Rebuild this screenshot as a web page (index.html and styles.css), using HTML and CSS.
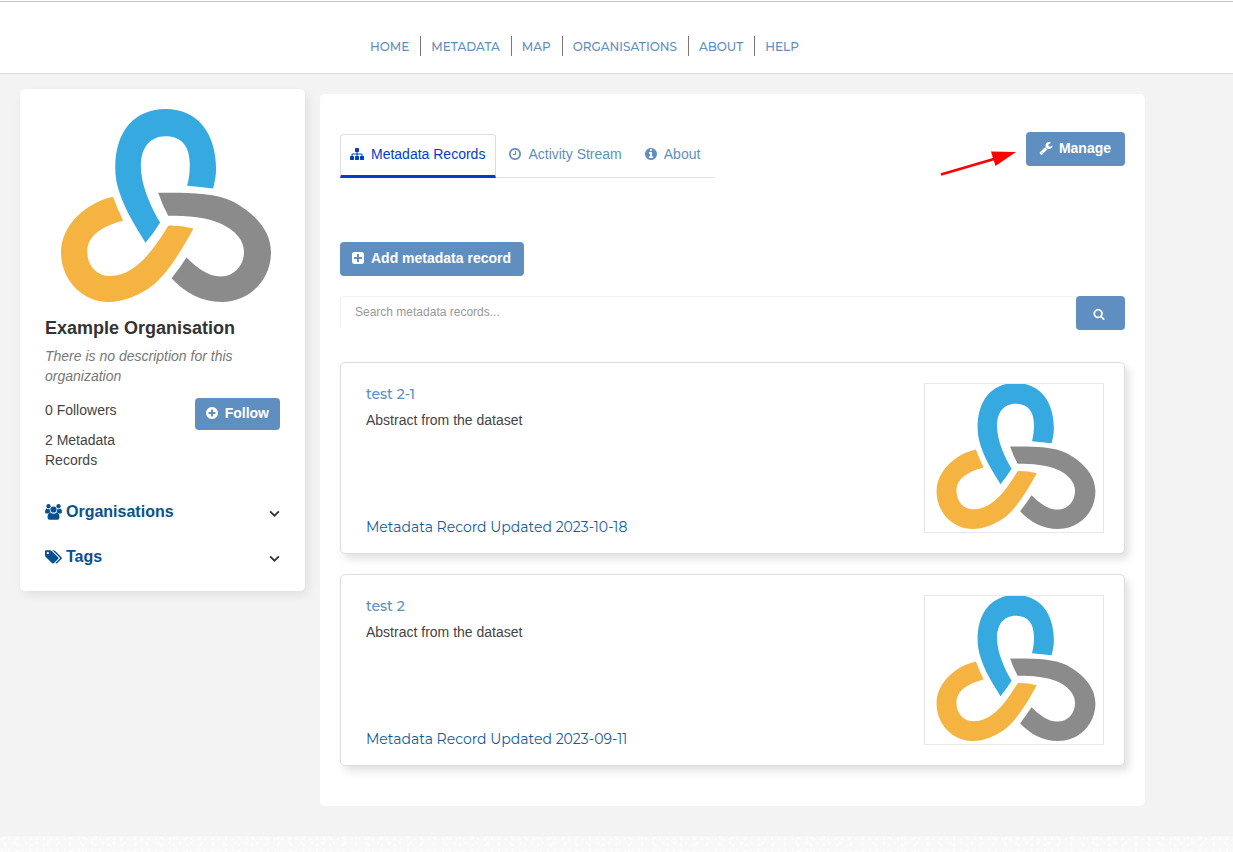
FILE: index.html
```html
<!DOCTYPE html>
<html lang="en">
<head>
<meta charset="utf-8">
<meta name="viewport" content="width=device-width, initial-scale=1">
<title>Example Organisation</title>
<link rel="stylesheet" href="styles.css">
</head>
<body>
<svg class="sprite" aria-hidden="true">
  <symbol id="logo" viewBox="62 41 631 580">
    <path fill="#36a9e1" d="M316 443C290 400 256 350 237 290C228 262 225 240 225 218C225 105 285 41 377 41C473 41 528 115 528 222C528 243 523 264 519 280Q480 275 441 272C447 250 449 230 449 208C449 155 426 123 376 123C327 123 302 160 302 212C302 270 333 337 360 382Q341 413 316 443Z"/>
    <path fill="#8b8b8b" d="M354 293C430 293 520 290 580 320C642 354 693 405 693 472C693 553 630 621 545 621C484 621 434 593 394 550Q418 520 439 487C470 517 503 544 542 544C583 544 612 511 612 470C612 433 583 405 546 387C500 366 442 362 384 362Q366 329 354 293Z"/>
    <path fill="#f5b341" d="M218 305Q232 342 249 377C195 390 141 418 141 469C141 513 170 543 210 543C290 543 346 453 385 391Q423 390 460 400C431 453 388 529 340 569C302 600 248 621 204 621C124 621 62 552 62 473C62 386 142 322 218 305Z"/>
  </symbol>
  <symbol id="sitemap" viewBox="0 0 1792 1792"><path d="M1792 1248v320q0 40-28 68t-68 28h-320q-40 0-68-28t-28-68v-320q0-40 28-68t68-28h96v-192h-512v192h96q40 0 68 28t28 68v320q0 40-28 68t-68 28h-320q-40 0-68-28t-28-68v-320q0-40 28-68t68-28h96v-192h-512v192h96q40 0 68 28t28 68v320q0 40-28 68t-68 28h-320q-40 0-68-28t-28-68v-320q0-40 28-68t68-28h96v-192q0-52 38-90t90-38h512v-192h-96q-40 0-68-28t-28-68v-320q0-40 28-68t68-28h320q40 0 68 28t28 68v320q0 40-28 68t-68 28h-96v192h512q52 0 90 38t38 90v192h96q40 0 68 28t28 68z"/></symbol>
  <symbol id="clock" viewBox="0 0 1792 1792"><path d="M1024 544v448q0 14-9 23t-23 9h-320q-14 0-23-9t-9-23v-64q0-14 9-23t23-9h224v-352q0-14 9-23t23-9h64q14 0 23 9t9 23zm416 352q0-148-73-273t-198-198-273-73-273 73-198 198-73 273 73 273 198 198 273 73 273-73 198-198 73-273zm224 0q0 209-103 385.500t-279.500 279.500-385.500 103-385.500-103-279.500-279.500-103-385.500 103-385.500 279.500-279.500 385.500-103 385.500 103 279.500 279.500 103 385.500z"/></symbol>
  <symbol id="info" viewBox="0 0 1792 1792"><path d="M1152 1376v-160q0-14-9-23t-23-9h-96v-512q0-14-9-23t-23-9h-320q-14 0-23 9t-9 23v160q0 14 9 23t23 9h96v320h-96q-14 0-23 9t-9 23v160q0 14 9 23t23 9h448q14 0 23-9t9-23zm-128-896v-160q0-14-9-23t-23-9h-192q-14 0-23 9t-9 23v160q0 14 9 23t23 9h192q14 0 23-9t9-23zm640 416q0 209-103 385.500t-279.500 279.500-385.500 103-385.500-103-279.500-279.500-103-385.500 103-385.500 279.500-279.500 385.500-103 385.500 103 279.500 279.500 103 385.500z"/></symbol>
  <symbol id="wrench" viewBox="0 0 1792 1792"><path d="M448 1472q0-26-19-45t-45-19-45 19-19 45 19 45 45 19 45-19 19-45zm644-420l-682 682q-37 37-90 37-52 0-91-37l-106-108q-38-36-38-90 0-53 38-91l681-681q39 98 114.500 173.500t173.500 114.500zm634-435q0 39-23 106-47 134-164.500 217.500t-258.500 83.500q-185 0-316.500-131.500t-131.500-316.500 131.500-316.500 316.500-131.500q58 0 121.500 16.500t107.500 46.500q16 11 16 28t-16 28l-293 169v224l193 107q5-3 79-48.500t135.500-81 70.500-35.500q15 0 23.500 10t8.500 25z"/></symbol>
  <symbol id="plus-square" viewBox="0 0 1792 1792"><path d="M1408 960v-128q0-26-19-45t-45-19h-320v-320q0-26-19-45t-45-19h-128q-26 0-45 19t-19 45v320h-320q-26 0-45 19t-19 45v128q0 26 19 45t45 19h320v320q0 26 19 45t45 19h128q26 0 45-19t19-45v-320h320q26 0 45-19t19-45zm256-544v960q0 119-84.500 203.500t-203.500 84.500h-960q-119 0-203.500-84.500t-84.500-203.500v-960q0-119 84.500-203.500t203.500-84.500h960q119 0 203.500 84.500t84.500 203.500z"/></symbol>
  <symbol id="plus-circle" viewBox="0 0 1792 1792"><path d="M1344 960v-128q0-26-19-45t-45-19h-256v-256q0-26-19-45t-45-19h-128q-26 0-45 19t-19 45v256h-256q-26 0-45 19t-19 45v128q0 26 19 45t45 19h256v256q0 26 19 45t45 19h128q26 0 45-19t19-45v-256h256q26 0 45-19t19-45zm320-64q0 209-103 385.500t-279.500 279.500-385.500 103-385.500-103-279.500-279.500-103-385.500 103-385.500 279.500-279.500 385.500-103 385.500 103 279.500 279.500 103 385.500z"/></symbol>
  <symbol id="search" viewBox="0 0 1792 1792"><path d="M1216 832q0-185-131.500-316.500t-316.500-131.500-316.500 131.500-131.500 316.500 131.500 316.500 316.500 131.500 316.500-131.500 131.500-316.500zm512 832q0 52-38 90t-90 38q-54 0-90-38l-343-342q-179 124-399 124-143 0-273.500-55.500t-225-150-150-225-55.500-273.500 55.500-273.500 150-225 225-150 273.500-55.500 273.500 55.500 225 150 150 225 55.500 273.500q0 220-124 399l343 343q37 37 37 90z"/></symbol>
  <symbol id="tags" viewBox="0 0 1920 1792"><path d="M448 448q0-53-37.500-90.500t-90.500-37.500-90.500 37.500-37.500 90.500 37.500 90.500 90.500 37.500 90.500-37.500 37.500-90.500zm1067 576q0 53-37 90l-491 492q-39 37-91 37-53 0-90-37l-715-716q-38-37-64.500-101t-26.500-117v-416q0-52 38-90t90-38h416q53 0 117 26.500t102 64.500l715 714q37 39 37 91zm384 0q0 53-37 90l-491 492q-39 37-91 37-36 0-59-14t-53-45l470-470q37-37 37-90 0-52-37-91l-715-714q-38-38-102-64.500t-117-26.500h224q53 0 117 26.500t102 64.500l715 714q37 39 37 91z"/></symbol>
  <symbol id="users" viewBox="0 0 34 32"><circle cx="7" cy="4.500" r="4.300"/><circle cx="27" cy="4.500" r="4.300"/><circle cx="17" cy="11" r="6.200"/><path d="M3 9Q5 11 9.500 10Q9 14 11.500 17Q8 17 6 19H3Q0 19 0 16Q0 10 3 9ZM31 9Q29 11 24.500 10Q25 14 22.500 17Q26 17 28 19H31Q34 19 34 16Q34 10 31 9ZM11 17.500Q17 21 23 17.500Q29 17.500 29 27Q29 31.500 24.500 31.500H9.500Q5 31.500 5 27Q5 17.500 11 17.500Z"/></symbol>
  <symbol id="chevron" viewBox="0 0 10 8"><path d="M1 2L5 6L9 2" fill="none" stroke="#333" stroke-width="1.600"/></symbol>
</svg>

<header class="header">
  <nav class="nav" aria-label="Main">
    <a href="#">HOME</a><a href="#">METADATA</a><a href="#">MAP</a><a href="#">ORGANISATIONS</a><a href="#">ABOUT</a><a href="#">HELP</a>
  </nav>
</header>

<div class="page">
  <aside class="sidebar">
    <svg class="org-logo" role="img" aria-label="Example Organisation logo"><use href="#logo"/></svg>
    <h1 class="org-name">Example Organisation</h1>
    <p class="org-empty">There is no description for this organization</p>
    <div class="org-stats">
      <div class="counts">
        <span>0 Followers</span>
        <span>2 Metadata Records</span>
      </div>
      <button class="btn btn-follow" type="button"><svg class="icon"><use href="#plus-circle"/></svg>Follow</button>
    </div>
    <div class="facets">
      <button class="facet" type="button"><svg class="facet-icon"><use href="#users"/></svg><span>Organisations</span><svg class="chevron"><use href="#chevron"/></svg></button>
      <button class="facet" type="button"><svg class="facet-icon"><use href="#tags"/></svg><span>Tags</span><svg class="chevron"><use href="#chevron"/></svg></button>
    </div>
  </aside>

  <main class="main">
    <div class="toolbar">
      <nav class="tabs" aria-label="Organisation">
        <a class="tab tab-active" href="#"><svg class="icon"><use href="#sitemap"/></svg>Metadata Records</a>
        <a class="tab" href="#"><svg class="icon"><use href="#clock"/></svg>Activity Stream</a>
        <a class="tab" href="#"><svg class="icon"><use href="#info"/></svg>About</a>
      </nav>
      <div class="manage">
        <svg class="arrow" viewBox="0 0 76 26" aria-hidden="true"><path d="M1 24.500L54 9" stroke="#f00" stroke-width="2.800"/><path d="M76 2L51 1.500L55.500 16Z" fill="#f00"/></svg>
        <a class="btn btn-manage" href="#"><svg class="icon"><use href="#wrench"/></svg>Manage</a>
      </div>
    </div>

    <a class="btn" href="#"><svg class="icon"><use href="#plus-square"/></svg>Add metadata record</a>

    <form class="search">
      <input type="text" aria-label="Search metadata records" placeholder="Search metadata records...">
      <button class="btn btn-search" type="button" aria-label="Search"><svg class="icon"><use href="#search"/></svg></button>
    </form>

    <div class="records">
      <article class="record">
        <div class="record-body">
          <h2 class="record-title"><a href="#">test 2-1</a></h2>
          <p class="abstract">Abstract from the dataset</p>
          <p class="updated">Metadata Record Updated 2023-10-18</p>
        </div>
        <div class="thumb"><svg role="img" aria-label="Example Organisation"><use href="#logo"/></svg></div>
      </article>
      <article class="record">
        <div class="record-body">
          <h2 class="record-title"><a href="#">test 2</a></h2>
          <p class="abstract">Abstract from the dataset</p>
          <p class="updated">Metadata Record Updated 2023-09-11</p>
        </div>
        <div class="thumb"><svg role="img" aria-label="Example Organisation"><use href="#logo"/></svg></div>
      </article>
    </div>
  </main>
</div>
<footer class="footer"></footer>
</body>
</html>
```

FILE: styles.css
```css
* { box-sizing: border-box; }

html { overflow-x: hidden; }

body {
  display: flex;
  flex-direction: column;
  min-height: 100vh;
  margin: 0;
  background: #f3f3f3;
  color: #444;
  font: 14px/20px "Liberation Sans", Arial, sans-serif;
}

h1, h2, p { margin: 0; }
a { color: #5f8fc1; text-decoration: none; }
button, input { font: inherit; }
svg { flex: none; fill: currentColor; }
.sprite { position: absolute; width: 0; height: 0; }

.header {
  margin-top: 1px;
  padding: 34px 360px 17px;
  border-top: 1px solid #c4c4c4;
  border-bottom: 1px solid #ddd;
  background: #fff;
  box-shadow: 0 -1px #fff;
}

.nav {
  display: flex;
  font-family: Montserrat, Inter, sans-serif;
  font-size: 12px;
  font-weight: 500;
  line-height: 18px;
}

.nav a { padding: 2px 11px 0 10px; }
.nav a + a { border-left: 1px solid #777; }

.page {
  display: flex;
  align-items: flex-start;
  gap: 15px;
  padding: 15px 88px 30px 20px;
}

.sidebar {
  flex: none;
  width: 285px;
  padding: 20px 25px;
  border-radius: 5px;
  background: #fff;
  box-shadow: 3px 4px 10px rgba(0, 0, 0, .08);
}

.org-logo {
  display: block;
  width: 210px;
  height: 193px;
  margin: 0 auto 14px 16px;
}

.org-name {
  margin-bottom: 6px;
  color: #333;
  font-size: 18px;
  line-height: 24px;
}

.org-empty { color: #777; font-style: italic; }

.org-stats {
  display: flex;
  justify-content: space-between;
  align-items: flex-start;
  margin-top: 12px;
}

.counts {
  display: flex;
  flex-direction: column;
  gap: 10px;
  width: 100px;
  padding-top: 2px;
}

.facets {
  display: flex;
  flex-direction: column;
  gap: 21px;
  margin: 30px 0 2px;
}

.facet {
  display: flex;
  align-items: center;
  gap: 4px;
  padding: 0;
  border: 0;
  background: none;
  color: #08518f;
  font-size: 16px;
  font-weight: bold;
  line-height: 24px;
}

.facet-icon { width: 17px; height: 16px; }
.chevron { width: 11px; height: 9px; margin: 2px 0 0 auto; }

.btn {
  display: inline-flex;
  align-items: center;
  gap: 6px;
  height: 34px;
  padding: 0 13px 2px 11px;
  border: 0;
  border-radius: 4px;
  background: #5f8fc1;
  color: #fff;
  font-weight: bold;
}

.icon { width: 14px; height: 14px; }
.btn-manage { padding-left: 13px; padding-right: 14px; }
.btn-follow { height: 32px; padding: 0 11px 2px 10px; }

.main {
  flex: 1;
  min-width: 0;
  margin-top: 5px;
  padding: 38px 20px 40px;
  border-radius: 5px;
  background: #fff;
}

.toolbar {
  display: flex;
  justify-content: space-between;
  align-items: flex-start;
  margin-bottom: 64px;
}

.tabs {
  display: flex;
  margin-top: 2px;
  border-bottom: 1px solid #ddd;
}

.tab {
  display: flex;
  align-items: center;
  gap: 6px;
  height: 44px;
  margin-bottom: -1px;
  padding: 0 12px 4px;
}

.tab:last-child { padding: 0 14px 4px 10px; }

.tab-active {
  padding: 0 10px 2px 9px;
  gap: 7px;
  border: 1px solid #ddd;
  border-bottom: 3px solid #003ec7;
  border-radius: 4px 4px 0 0;
  color: #003ec7;
}

.manage { display: flex; gap: 10px; }
.arrow { width: 76px; height: 26px; margin-top: 18px; }

.search {
  display: flex;
  margin: 20px 0 32px;
}

.search input {
  flex: 1;
  min-width: 0;
  height: 34px;
  padding: 0 14px 2px;
  border: 1px solid #f1f1f1;
  border-bottom-color: #fff;
  border-right: 0;
  border-radius: 5px 0 0 5px;
  background: #fff;
  font-size: 12px;
}

.search input::placeholder { color: #999; opacity: 1; }

.btn-search {
  justify-content: center;
  width: 49px;
  padding: 2px 3px 0 0;
}

.btn-search .icon { width: 12px; height: 12px; }

.records {
  display: flex;
  flex-direction: column;
  gap: 20px;
}

.record {
  display: flex;
  justify-content: space-between;
  padding: 20px 20px 20px 25px;
  border: 1px solid #ddd;
  border-radius: 5px;
  background: #fff;
  box-shadow: 4px 5px 8px rgba(0, 0, 0, .12);
}

.record-body { display: flex; flex-direction: column; }

.record-title,
.updated {
  font-family: Montserrat, Inter, sans-serif;
  font-size: 14px;
}

.record-title { padding-top: 1px; margin-bottom: 6px; font-weight: 500; }
.updated { margin: auto 0 -4px; color: #0f5c9f; font-weight: 400; }

.thumb {
  width: 180px;
  height: 150px;
  overflow: hidden;
  border: 1px solid #e7e7e7;
}

.thumb svg {
  display: block;
  width: 160px;
  height: 146px;
  margin: -1px auto 0 11px;
}

.footer {
  flex: 1;
  min-height: 16px;
  background-color: #f8f8f8;
  background-image:
    radial-gradient(circle at 2px 3px, #fff 0, transparent 2px),
    radial-gradient(circle at 5px 2px, #fff 0, transparent 2px),
    radial-gradient(circle at 4px 7px, #fff 0, transparent 2px);
  background-size: 7px 11px, 13px 7px, 11px 13px;
}
```
